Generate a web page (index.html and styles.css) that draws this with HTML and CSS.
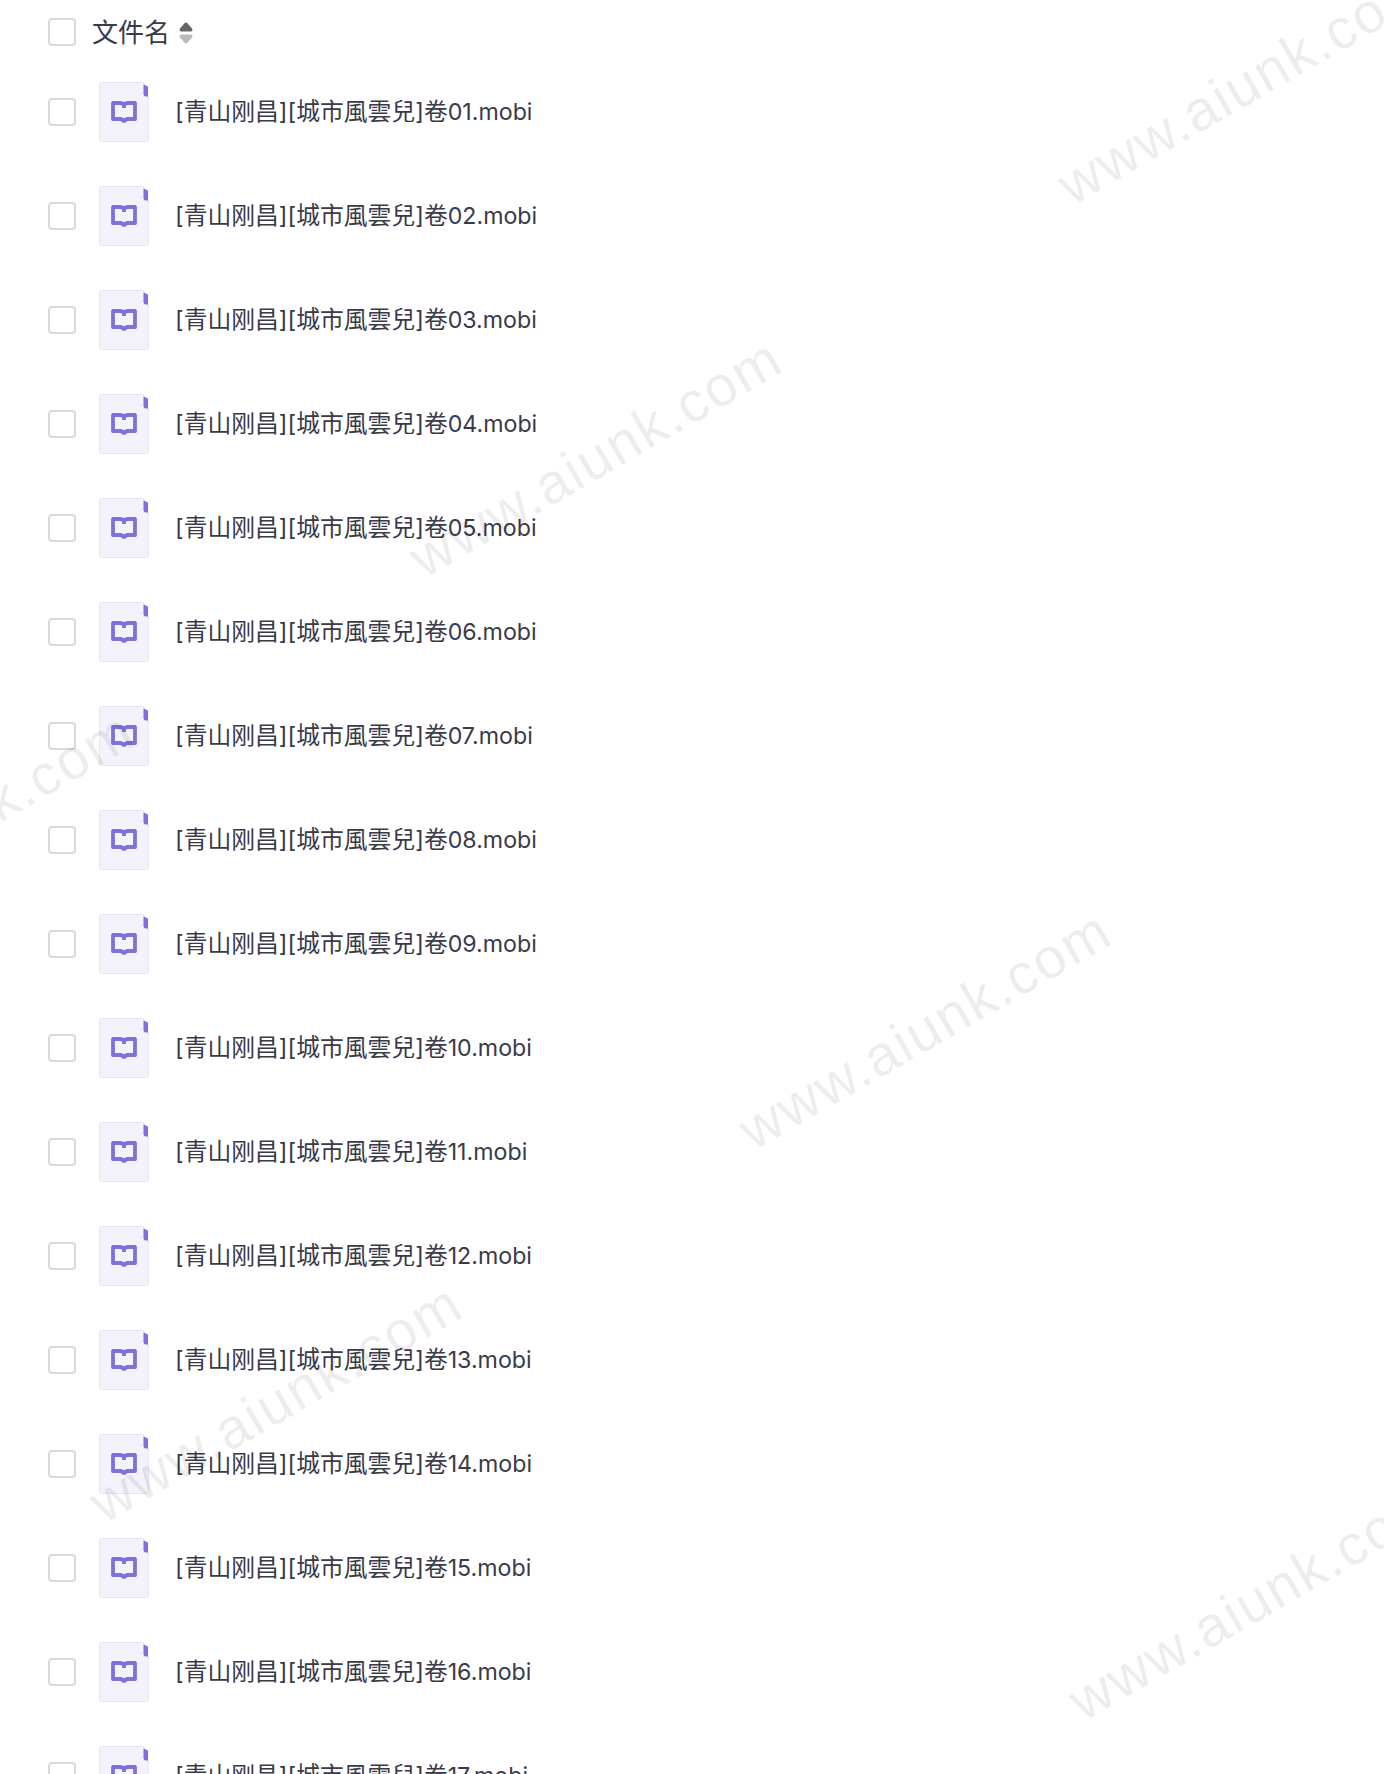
FILE: index.html
```html
<!DOCTYPE html>
<html lang="zh-CN">
<head>
    <meta charset="UTF-8">
    <title>文件名</title>
    <link rel="stylesheet" href="styles.css">
</head>
<body>
<svg class="sprite" width="0" height="0">
    <symbol id="file-book" viewBox="0 0 50 60">
        <path class="page" d="M3 .5H43.5Q45 .5 45.5 2V13.5H49.5V57Q49.5 59.5 47 59.5H3Q.5 59.5 .5 57V3Q.5 .5 3 .5Z"/>
        <path class="tab" d="M44.5 2.5L49 4.5V14.5H47Q44.5 14.5 44.5 12Z"/>
        <path class="book" d="M14 21H21Q24 21 25 23.5Q26 21 29 21H36V37H29Q26.5 37 25.8 38.8H24.2Q23.5 37 21 37H14ZM25 23.5V26"/>
    </symbol>
</svg>

<div class="file-list">
    <div class="list-head">
        <span class="checkbox"></span>
        <span class="head-title">文件名</span>
        <span class="sort-icon">
            <svg width="14" height="22" viewBox="0 0 14 22">
                <path fill="#666" d="M5.6 1.2Q7 0 8.4 1.2L13 6.6Q14.2 9 12 9.5H2Q-.2 9 1 6.6Z"/>
                <path fill="#bbb" d="M2 12.5H12Q14.2 13 13 15.4L8.4 20.8Q7 22 5.6 20.8L1 15.4Q-.2 13 2 12.5Z"/>
            </svg>
        </span>
    </div>
    <div class="file-row"><span class="checkbox"></span><svg class="file-icon"><use href="#file-book"/></svg><span class="file-name">[青山刚昌][城市風雲兒]卷<span class="file-ext">01.mobi</span></span></div>
    <div class="file-row"><span class="checkbox"></span><svg class="file-icon"><use href="#file-book"/></svg><span class="file-name">[青山刚昌][城市風雲兒]卷<span class="file-ext">02.mobi</span></span></div>
    <div class="file-row"><span class="checkbox"></span><svg class="file-icon"><use href="#file-book"/></svg><span class="file-name">[青山刚昌][城市風雲兒]卷<span class="file-ext">03.mobi</span></span></div>
    <div class="file-row"><span class="checkbox"></span><svg class="file-icon"><use href="#file-book"/></svg><span class="file-name">[青山刚昌][城市風雲兒]卷<span class="file-ext">04.mobi</span></span></div>
    <div class="file-row"><span class="checkbox"></span><svg class="file-icon"><use href="#file-book"/></svg><span class="file-name">[青山刚昌][城市風雲兒]卷<span class="file-ext">05.mobi</span></span></div>
    <div class="file-row"><span class="checkbox"></span><svg class="file-icon"><use href="#file-book"/></svg><span class="file-name">[青山刚昌][城市風雲兒]卷<span class="file-ext">06.mobi</span></span></div>
    <div class="file-row"><span class="checkbox"></span><svg class="file-icon"><use href="#file-book"/></svg><span class="file-name">[青山刚昌][城市風雲兒]卷<span class="file-ext">07.mobi</span></span></div>
    <div class="file-row"><span class="checkbox"></span><svg class="file-icon"><use href="#file-book"/></svg><span class="file-name">[青山刚昌][城市風雲兒]卷<span class="file-ext">08.mobi</span></span></div>
    <div class="file-row"><span class="checkbox"></span><svg class="file-icon"><use href="#file-book"/></svg><span class="file-name">[青山刚昌][城市風雲兒]卷<span class="file-ext">09.mobi</span></span></div>
    <div class="file-row"><span class="checkbox"></span><svg class="file-icon"><use href="#file-book"/></svg><span class="file-name">[青山刚昌][城市風雲兒]卷<span class="file-ext">10.mobi</span></span></div>
    <div class="file-row"><span class="checkbox"></span><svg class="file-icon"><use href="#file-book"/></svg><span class="file-name">[青山刚昌][城市風雲兒]卷<span class="file-ext">11.mobi</span></span></div>
    <div class="file-row"><span class="checkbox"></span><svg class="file-icon"><use href="#file-book"/></svg><span class="file-name">[青山刚昌][城市風雲兒]卷<span class="file-ext">12.mobi</span></span></div>
    <div class="file-row"><span class="checkbox"></span><svg class="file-icon"><use href="#file-book"/></svg><span class="file-name">[青山刚昌][城市風雲兒]卷<span class="file-ext">13.mobi</span></span></div>
    <div class="file-row"><span class="checkbox"></span><svg class="file-icon"><use href="#file-book"/></svg><span class="file-name">[青山刚昌][城市風雲兒]卷<span class="file-ext">14.mobi</span></span></div>
    <div class="file-row"><span class="checkbox"></span><svg class="file-icon"><use href="#file-book"/></svg><span class="file-name">[青山刚昌][城市風雲兒]卷<span class="file-ext">15.mobi</span></span></div>
    <div class="file-row"><span class="checkbox"></span><svg class="file-icon"><use href="#file-book"/></svg><span class="file-name">[青山刚昌][城市風雲兒]卷<span class="file-ext">16.mobi</span></span></div>
    <div class="file-row"><span class="checkbox"></span><svg class="file-icon"><use href="#file-book"/></svg><span class="file-name">[青山刚昌][城市風雲兒]卷<span class="file-ext">17.mobi</span></span></div>
</div>

<!-- watermark sits over the list -->
<div class="watermark wm-1">www.aiunk.com</div>
<div class="watermark wm-2">www.aiunk.com</div>
<div class="watermark wm-3">www.aiunk.com</div>
<div class="watermark wm-4">www.aiunk.com</div>
<div class="watermark wm-5">www.aiunk.com</div>
<div class="watermark wm-6">www.aiunk.com</div>
</body>
</html>
```

FILE: styles.css
```css
html, body {
    margin: 0;
    padding: 0;
    height: 1774px;
    overflow: hidden;
    background-color: #fff;
}
body {
    font-family: Inter, "Noto Sans CJK SC", "Noto Sans", sans-serif;
    color: #3a3a48;
    position: relative;
}
.sprite {
    position: absolute;
}
.file-list {
    padding: 0 0 0 48px;
}
.list-head {
    display: flex;
    align-items: center;
    height: 64px;
    margin-bottom: -4px;
}
.file-row {
    display: flex;
    align-items: center;
    height: 104px;
}
.checkbox {
    box-sizing: border-box;
    width: 28px;
    height: 28px;
    border: 2px solid #d9d9d9;
    border-radius: 4px;
    background-color: #fff;
    flex-shrink: 0;
}
.head-title {
    margin: 2px 0 0 16px;
    font-size: 26px;
    line-height: 32px;
}
.sort-icon {
    margin: 2px 0 0 9px;
    display: flex;
}
.file-icon {
    width: 50px;
    height: 60px;
    margin-left: 23px;
    flex-shrink: 0;
}
.page {
    fill: #f4f3fc;
    stroke: #e6e4f6;
}
.tab {
    fill: #7d72dc;
}
.book {
    fill: none;
    stroke: #7d72dc;
    stroke-width: 3.8;
    stroke-linejoin: round;
}
.file-name {
    margin-left: 26px;
    font-size: 23.8px;
    line-height: 32px;
    white-space: nowrap;
}
.file-ext {
    font-size: 23.2px;
}
.watermark {
    position: absolute;
    font-family: "Liberation Sans", sans-serif;
    font-size: 56.5px;
    line-height: 1;
    letter-spacing: 2px;
    color: rgba(0, 0, 0, 0.07);
    white-space: nowrap;
    transform: rotate(-30deg);
    transform-origin: left bottom;
    pointer-events: none;
}
.wm-1 { left: 1077px; top: 158px; }
.wm-2 { left: 429px; top: 531px; }
.wm-3 { left: -219px; top: 904px; }
.wm-4 { left: 758px; top: 1103px; }
.wm-5 { left: 109px; top: 1476px; }
.wm-6 { left: 1088px; top: 1674px; }
```
